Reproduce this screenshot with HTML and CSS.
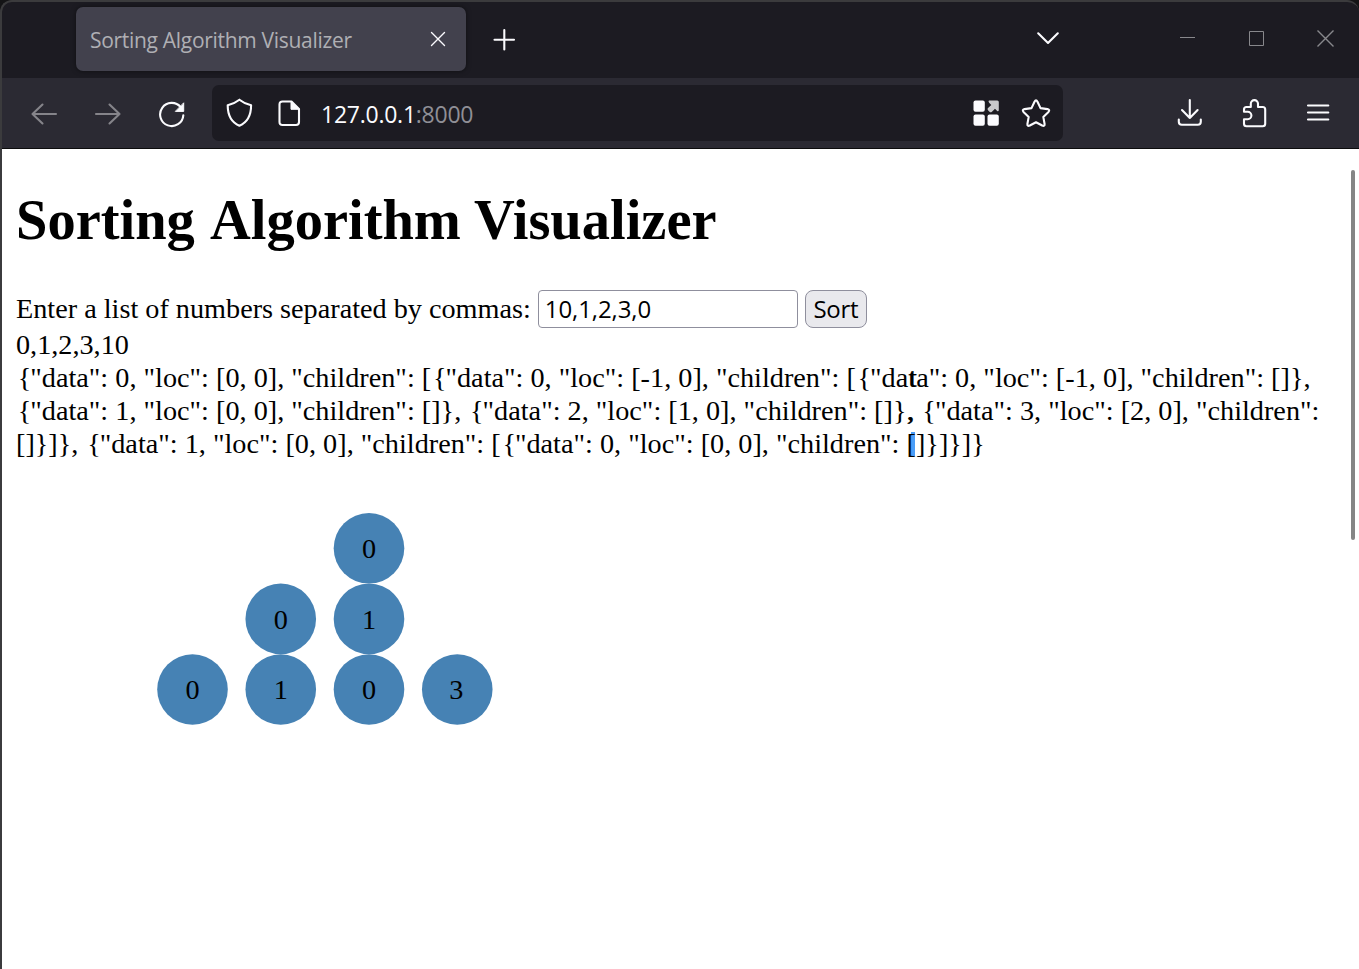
FILE: index.html
```html
<!DOCTYPE html>
<html lang="en">
<head>
<meta charset="utf-8">
<title>Sorting Algorithm Visualizer</title>
<link rel="stylesheet" href="styles.css">
</head>
<body>
<div class="window">
  <header class="tabstrip">
    <div class="tab">
      <span class="tab-title">Sorting Algorithm Visualizer</span>
      <svg class="tab-close" width="16" height="16" viewBox="0 0 16 16"><path d="M1.500 1.500l13 13M14.500 1.500l-13 13"/></svg>
    </div>
    <svg class="new-tab" width="24" height="24" viewBox="0 0 24 24"><path d="M12.300 2v19.500M2.500 11.700H22"/></svg>
    <svg class="all-tabs" width="24" height="14" viewBox="0 0 24 14"><path d="M2.200 2.300l9.800 9.600 9.800-9.600"/></svg>
    <div class="controls">
      <svg width="18" height="18" viewBox="0 0 18 18"><path d="M1 7.500h15"/></svg>
      <svg width="18" height="18" viewBox="0 0 18 18"><path d="M1.500 1.500h14v14h-14z"/></svg>
      <svg width="18" height="18" viewBox="0 0 18 18"><path class="close" d="M.5.500l16 16M16.500.500l-16 16"/></svg>
    </div>
  </header>
  <nav class="toolbar">
    <div class="nav-buttons">
      <svg class="dim" width="28" height="28" viewBox="0 0 28 28"><path d="M26 14H2.500M12.500 4.500L2.500 14l10 9.500"/></svg>
      <svg class="dim" width="28" height="28" viewBox="0 0 28 28"><path d="M2 14h23.500M15.500 4.500l10 9.500-10 9.500"/></svg>
      <svg width="28" height="28" viewBox="0 0 28 28"><path d="M25.300 15.300a11.600 11.600 0 1 1-2.600-8.200"/><path class="solid" d="M25.700 3.200v8.200h-8z"/></svg>
    </div>
    <div class="urlbar">
      <svg width="28" height="30" viewBox="0 0 28 30"><path d="M14.400 1.700c3.500 2.800 7.400 4.500 11.700 5.500 0 9-2.600 16.600-11.700 20.500C5.300 23.800 2.700 16.200 2.700 7.200c4.300-1 8.200-2.700 11.700-5.500z"/></svg>
      <svg class="page-icon" width="24" height="28" viewBox="0 0 24 28"><path d="M5.500 2.500h9L22 10v13q0 3-3 3H5.500q-3 0-3-3V5.500q0-3 3-3z"/><path class="solid" d="M14 2.500v7.800h8z"/></svg>
      <div class="url">127.0.0.1<span>:8000</span></div>
      <svg class="tiles" width="28" height="28" viewBox="0 0 28 28"><rect x="1.500" y="1.500" width="11.300" height="11.300" rx="2"/><rect x="1.500" y="15.500" width="11.300" height="11.300" rx="2"/><rect x="15.500" y="15.500" width="11.300" height="11.300" rx="2"/><path class="arrow" d="M17 1.500h8.300q1.500 0 1.500 1.500v8.300q-.3 1.500-1.600.7l-2.200-2.200-3.300 3.200q-1.200.8-2.200-.2l-1.500-1.500q-1-1.200 0-2.200l3.300-3.200-2.200-2.200q-1.200-1.600-.1-2.200z"/></svg>
      <svg class="star" width="30" height="30" viewBox="0 0 30 30"><path d="M13.500 3.700q1.500-2.700 3 0l3 6.400 7 1q2.800.7 1 2.800l-5.200 5 1.300 7.100q.2 2.700-2.400 1.500L15 24.200l-6.200 3.300q-2.600 1.200-2.400-1.500l1.300-7.100-5.200-5q-1.800-2.100 1-2.800l7-1z"/></svg>
    </div>
    <div class="actions">
      <svg width="28" height="30" viewBox="0 0 28 30"><path d="M13.800 2v18M6 12l7.800 8 7.800-8M2.800 21.500v2.300q0 3 3 3h16q3 0 3-3v-2.300"/></svg>
      <svg width="28" height="30" viewBox="0 0 28 30"><path d="M6.500 9h4.300V5.700a3.600 3.600 0 0 1 7.200 0V9h4.700q2.500 0 2.500 2.500v14.200q0 2.500-2.500 2.500H6.500q-2.500 0-2.500-2.500v-4.500h3.700a3.700 3.700 0 0 0 0-7.400H4v-2.300Q4 9 6.500 9z"/></svg>
      <svg width="28" height="30" viewBox="0 0 28 30"><path d="M4 7.500h20.300M4 14.500h20.300M4 21.500h20.300"/></svg>
    </div>
  </nav>
  <main class="page">
    <h1>Sorting <span>Algorithm Visualizer</span></h1>
    <form class="entry">
      <label for="numbers">Enter a list of numbers separated by commas:</label>
      <input id="numbers" type="text" value="10,1,2,3,0">
      <button type="button">Sort</button>
    </form>
    <div class="sorted">0,1,2,3,10</div>
    <div class="tree-data"><span class="brace">{</span>"data": 0, "loc": [0, 0], "children": [<span class="brace">{</span>"data": 0, "loc": [-1, 0], "children": [<span class="brace">{</span>"da<span class="dark">t</span>a": 0, "loc": [-1, 0], "children": []},<br><span class="brace">{</span>"data": 1, "loc": [0, 0], "children": []}, <span class="brace">{</span>"data": 2, "loc": [1, 0], "children": []}<span class="dark">,</span> <span class="brace">{</span>"data": 3, "loc": [2, 0], "children":<br>[]}]}, <span class="brace">{</span>"data": 1, "loc": [0, 0], "children": [<span class="brace">{</span>"data": 0, "loc": [0, 0], "children": <span class="mark">[</span>]}]}]}</div>
    <svg class="tree" width="706" height="353" viewBox="0 0 400 200">
      <g class="nodes">
        <circle cx="200" cy="20" r="20"/><circle cx="150" cy="60" r="20"/><circle cx="200" cy="60" r="20"/>
        <circle cx="100" cy="100" r="20"/><circle cx="150" cy="100" r="20"/><circle cx="200" cy="100" r="20"/><circle cx="250" cy="100" r="20"/>
      </g>
      <g class="values">
        <text x="200" y="25.500">0</text><text x="150" y="65.700">0</text><text x="200" y="65.700">1</text>
        <text x="100" y="105.500">0</text><text x="150" y="105.500">1</text><text x="200" y="105.500">0</text><text x="249.500" y="105.500">3</text>
      </g>
    </svg>
    <div class="scrollbar"></div>
  </main>
</div>
</body>
</html>
```
FILE: styles.css
```css
* { box-sizing: border-box; }
body { margin: 0; background: #141416; overflow: hidden; }
svg { display: block; flex: none; }
.window {
  height: 969px;
  display: flex;
  flex-direction: column;
  border-top: 2px solid #3b3b3d;
  border-left: 2px solid #3b3b3d;
  border-radius: 12px 12px 0 0;
  background: #1c1b22;
  overflow: hidden;
}
.tabstrip, .toolbar { font-family: "Open Sans", "Noto Sans", sans-serif; }
.tabstrip svg, .toolbar svg {
  fill: none;
  stroke: #fbfbfe;
  stroke-width: 2.1;
  stroke-linecap: round;
  stroke-linejoin: round;
}
.tabstrip {
  height: 76px;
  flex: none;
  display: flex;
  align-items: flex-start;
  padding: 5px 24px 0 74px;
}
.tab {
  width: 390px;
  height: 64px;
  display: flex;
  align-items: center;
  justify-content: space-between;
  padding: 0 20px 0 14px;
  border-radius: 7px;
  background: #42414d;
  box-shadow: 0 0 5px rgba(0, 0, 0, .5);
}
.tab-title { color: #afafb4; font-size: 21px; letter-spacing: -.3px; white-space: nowrap; padding-top: 2px; }
.tabstrip .tab-close { stroke-width: 1.4; }
.new-tab { margin: 21px 0 0 26px; }
.all-tabs { margin: 24px 0 0 auto; }
.controls { display: flex; gap: 51px; margin: 23px 0 0 119px; }
.tabstrip .controls svg { stroke: #88888c; stroke-width: 1; stroke-linecap: butt; stroke-linejoin: miter; }
.tabstrip .controls .close { stroke-width: 1.4; }
.toolbar {
  height: 71px;
  flex: none;
  display: flex;
  align-items: center;
  padding: 0 27px 1px 28px;
  background: #2b2a33;
  border-bottom: 1px solid #0c0c0d;
}
.nav-buttons { display: flex; gap: 36px; padding-top: 2px; }
.toolbar .dim { stroke: #85848a; }
.toolbar .solid { fill: #fbfbfe; stroke-width: 1; }
.urlbar {
  width: 851px;
  height: 56px;
  display: flex;
  align-items: center;
  margin-left: 26px;
  padding: 0 12px 0 13px;
  border-radius: 7px;
  background: #1c1b22;
}
.page-icon { margin-left: 24px; }
.url { margin: 3px auto 0 20px; color: #fbfbfe; font-size: 23px; letter-spacing: -.25px; }
.url span { color: #8f8f96; }
.toolbar .tiles { fill: #fbfbfe; stroke: none; }
.tiles .arrow { fill: #c9c9cc; }
.star { margin-left: 21px; }
.actions { display: flex; gap: 36px; margin-left: auto; }
.page {
  position: relative;
  flex: 1;
  padding: 38px 14px 0;
  background: #fff;
  color: #000;
  font: 28.235px/33px "Liberation Serif", "Times New Roman", serif;
}
h1 { margin: 0 0 36px; font-size: 56.470px; line-height: 67px; white-space: nowrap; }
h1 span { margin-left: 1px; }
.entry { height: 38px; display: flex; align-items: center; }
.entry label { white-space: nowrap; padding-bottom: 2px; }
.entry input, .entry button {
  height: 38px;
  border: 1px solid #8f8f9d;
  color: #000;
  font: 24px "Open Sans", "Noto Sans", sans-serif;
  letter-spacing: -.1px;
}
.entry input { width: 260px; margin: 0 7px; padding: 0 6px 2px; border-radius: 4px; background: #fff; }
.entry button { width: 62px; padding: 0 0 2px; border-radius: 8px; background: #e9e9ed; letter-spacing: -.3px; }
.tree-data { white-space: nowrap; letter-spacing: .01px; }
.brace { margin: 0 -1px 0 1.700px; }
.dark { text-shadow: 1px 0 0 #000; }
.mark { background: linear-gradient(#4a9df8, #4a9df8) 4px 4px / 4px 24px no-repeat; }
.tree { margin-top: 53px; }
.nodes { fill: steelblue; }
.values { font-size: 16px; text-anchor: middle; fill: #000; }
.scrollbar {
  position: absolute;
  top: 21px;
  right: 4px;
  width: 4px;
  height: 370px;
  border-radius: 2px;
  background: #858585;
}
```
